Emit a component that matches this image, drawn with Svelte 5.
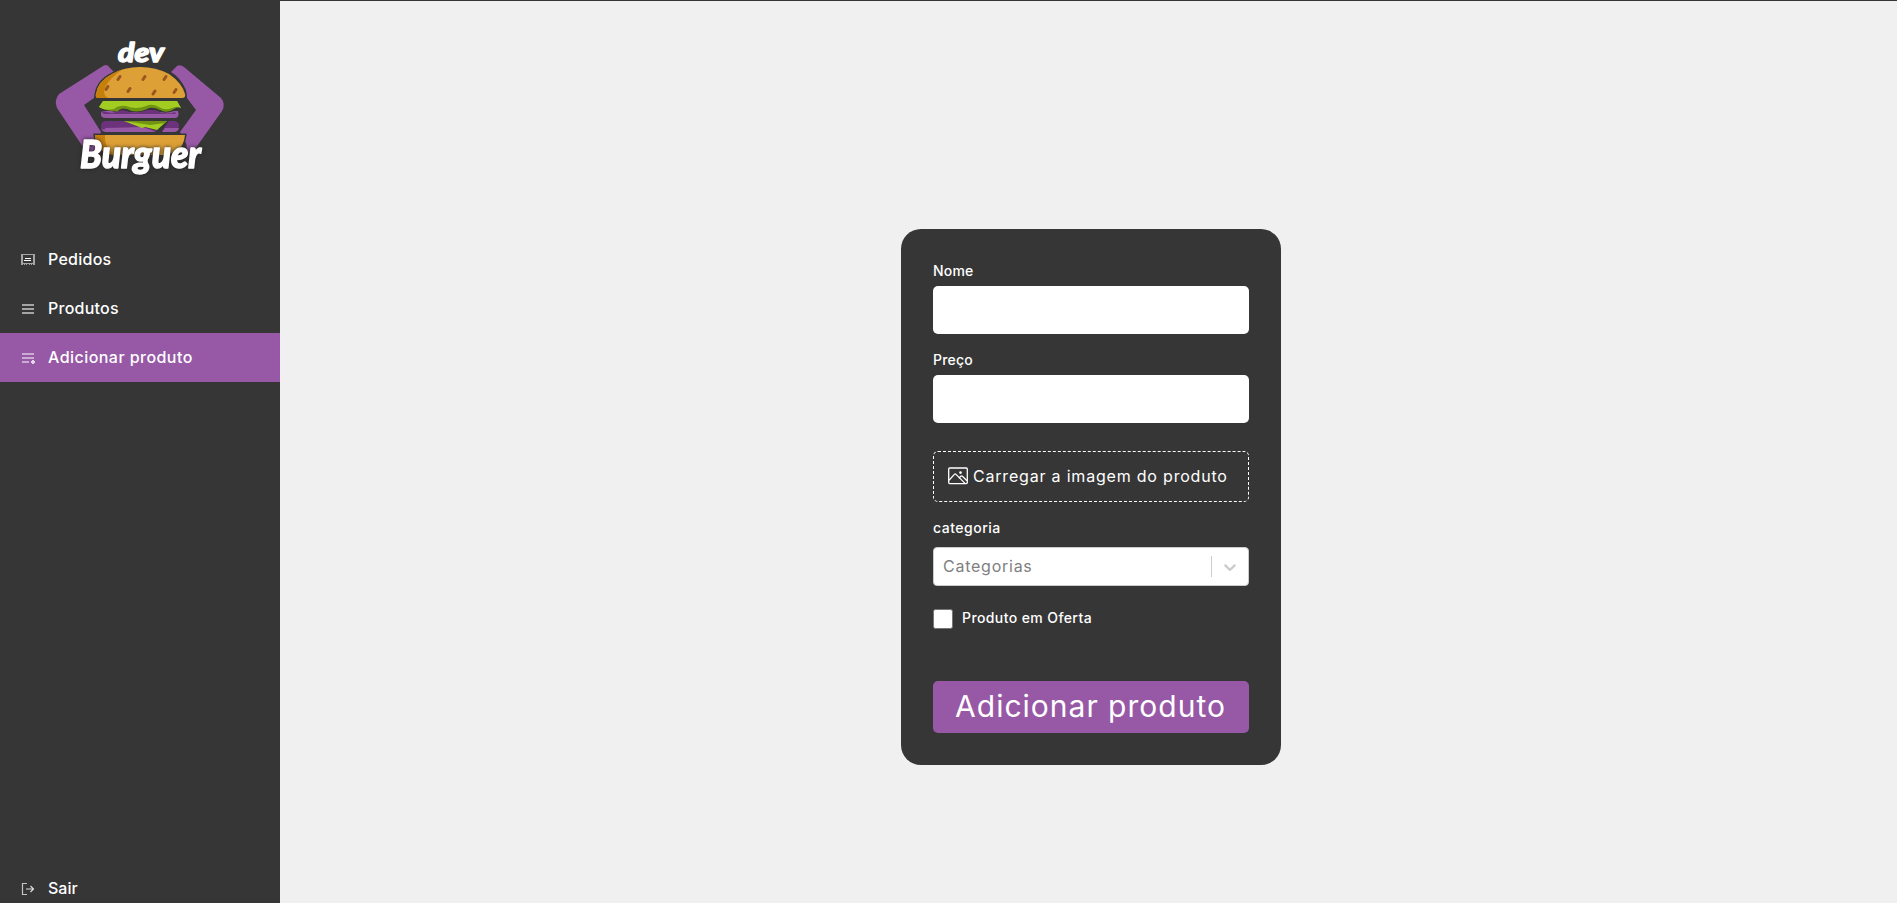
<script>
  const links = [
    { id: 'orders', label: 'Pedidos', spacing: 0.25 },
    { id: 'list', label: 'Produtos', spacing: 0.25 },
    { id: 'add', label: 'Adicionar produto', spacing: 0.45, active: true }
  ];
  const seeds = [[78, 48], [103, 48], [124, 48], [66, 58], [88, 60], [113, 62.5], [134, 61]];
</script>

<div class="page">
  <aside>
    <svg class="logo" viewBox="0 0 200 160" role="img" aria-label="dev Burguer">
      <path fill="#9758a6" d="M63 36Q67 33 70 38L74 42Q64 48 57 57L54 68 44 75 61 102 54 124 45 120 17 78Q14 70 19 64Z" />
      <path fill="#9758a6" d="M131 42L137 36Q140 34 144 37L181 68Q186 74 182 81L155 119 148 124 146 113 140 102 156 80 147 68 146 60Q140 47 131 42Z" />
      <path fill="#dda036" stroke="#363636" stroke-width="3" paint-order="stroke" d="M56 64Q58 51 72 44 84 37 100 37 116 37 129 44 142 53 145 64Q146 68 142 68H58Q55 68 56 64Z" />
      <path fill="#c77f0c" d="M56 64Q58 51 72 44L83 39Q66 51 64 61 64 66 68 68H58Q55 68 56 64Z" />
      <g stroke="#99561f" stroke-width="3" stroke-linecap="round">
        {#each seeds as [x, y]}
          <path d="M{x} {y + 1.5}l2-3" />
        {/each}
      </g>
      <path fill="#709412" d="M63 71H137L141 78Q138 76 134 79 127 84 120 80 112 76 107 79 96 84 87 79 81 77 77 82L75 81Q65 81 59 77Z" />
      <path fill="#a3cc22" d="M63 71H137L141 78Q137 76 132 78 125 81 119 77 112 73 106 76 96 80 86 76 79 75 74 79 65 81 59 77Z" />
      <path fill="#9758a6" d="M62 81H71L76 82 83 81Q92 83 103 82L114 80Q124 85 134 81H138Q140 88 135 88H66Q60 88 61 83Z" />
      <path fill="#6c327b" d="M72 83L83 80Q94 85 107 80L115 80Q125 86 135 82L136 84H65Q62 84 62 81Z" />
      <path fill="#6c327b" d="M65 91H85L118 101H65Q61 101 61 96 61 92 65 91ZM135 91Q139 92 139 96 139 101 134 101H122L129 91Z" />
      <path fill="#9758a6" d="M61 98Q63 101 66 98L103 97 116 102H66Q62 102 61 98ZM125 98H139Q138 102 134 102H122Z" />
      <path fill="#a3cc22" d="M84 91H127L117 100 105 97 102 98Z" />
      <path fill="#709412" d="M84 91H127L125 93 110 95Z" />
      <path fill="#dda036" stroke="#363636" stroke-width="3" paint-order="stroke" d="M55 105H145Q144 115 138 120 130 125 122 125H76Q60 123 56 113Z" />
      <path fill="#c77f0c" d="M55 105H65Q64 118 75 125 60 123 56 113Z" />
      <g class="script">
        <text x="78" y="32" font-size="27" textLength="46" lengthAdjust="spacingAndGlyphs">dev</text>
        <text class="outlined" x="40" y="138" font-size="37" textLength="121" lengthAdjust="spacingAndGlyphs">Burguer</text>
      </g>
    </svg>

    <nav>
      {#each links as link}
        <a class:active={link.active} href="#{link.id}">
          <svg class="icon" viewBox="0 0 14 14" shape-rendering="crispEdges">
            {#if link.id === 'orders'}
              <path fill="#a5a5a5" fill-rule="evenodd" d="M0 1h14v11h-2v-1h-1v1h-1v-1H9v1H8v-1H6v1H5v-1H4v1H3v-1H2v1H0zM2 2v8h10V2z" />
              <path fill="#fff" d="M4 5h6v1H4zM3 7h7v1H3z" />
            {:else if link.id === 'list'}
              <path fill="#a5a5a5" d="M1 2h12v2H1zM1 6h12v2H1zM1 10h12v2H1z" />
            {:else}
              <path fill="#cbabd2" d="M1 2h12v2H1zM1 6h12v2H1zM1 10h7v2H1z" />
              <path fill="#e5d5e9" d="M11 9h2v1h1v2h-1v1h-2v-1h-1v-2h1z" />
            {/if}
          </svg>
          <span style:letter-spacing="{link.spacing}px">{link.label}</span>
        </a>
      {/each}
    </nav>

    <a class="exit" href="#exit">
      <svg class="icon" viewBox="0 0 14 14" fill="none">
        <path stroke="#c5c5c5" d="M6 1.5H1.5v11H6" stroke-width="1.2" />
        <path stroke="#ddd" d="M5 7h7M9.5 4l3 3-3 3" stroke-width="1.2" />
      </svg>
      <span>Sair</span>
    </a>
  </aside>

  <main>
    <form>
      <label class="field"><span>Nome</span><input type="text" /></label>
      <label class="field"><span>Preço</span><input type="text" /></label>

      <div class="upload">
        <svg width="20" height="18" viewBox="0 0 20 18" fill="none" stroke="#fff" stroke-width="1.3">
          <rect x=".7" y="1" width="18.6" height="15.6" rx="1" />
          <path d="M1 13.2l5.4-5.8q.8-.8 1.6 0l8.8 8.7M10.8 11.2l2-2q.8-.7 1.6 0l4.6 4.5" />
          <circle cx="12.5" cy="5.6" r=".7" fill="#fff" />
        </svg>
        <span>Carregar a imagem do produto</span>
      </div>

      <span class="category">categoria</span>
      <div class="select">
        <span>Categorias</span>
        <i></i>
        <svg width="20" height="20" viewBox="0 0 20 20" fill="#ccc">
          <path d="M4.516 7.548c0.436-0.446 1.043-0.481 1.576 0l3.908 3.747 3.908-3.747c0.533-0.481 1.141-0.446 1.574 0 0.436 0.445 0.408 1.197 0 1.615-0.406 0.418-4.695 4.502-4.695 4.502-0.217 0.223-0.502 0.335-0.787 0.335s-0.57-0.112-0.789-0.335c0 0-4.287-4.084-4.695-4.502s-0.436-1.17 0-1.615z" />
        </svg>
      </div>

      <div class="offer"><b></b><span>Produto em Oferta</span></div>
      <button type="button">Adicionar produto</button>
    </form>
  </main>
</div>

<style>
  :global(body) { margin: 0; }
  .page {
    display: flex;
    box-sizing: border-box;
    height: 903px;
    border-top: 1px solid #363636;
    background: #f0f0f0;
    font-family: Inter, "Liberation Sans", sans-serif;
    font-size: 16px;
    font-weight: 500;
    color: #fff;
    overflow: hidden;
  }
  * { box-sizing: border-box; }
  aside {
    display: flex;
    flex-direction: column;
    width: 280px;
    background: #363636;
  }
  .logo {
    display: block;
    width: 200px;
    height: 160px;
    margin: 29px 0 43px 40px;
    flex: none;
  }
  .script {
    font-family: Lato, sans-serif;
    font-weight: 900;
    font-style: italic;
    fill: #fff;
    stroke: #fff;
    stroke-width: 1.4;
    stroke-linejoin: round;
  }
  .outlined { filter: drop-shadow(0 0 2px #222); }
  nav { display: flex; flex-direction: column; padding-top: 2px; }
  nav a, .exit {
    display: flex;
    align-items: center;
    gap: 13px;
    height: 49px;
    padding: 0 0 1px 21px;
    color: #fff;
    text-decoration: none;
    white-space: nowrap;
  }
  .active { background: #9758a6; }
  .exit { height: 29px; margin-top: auto; }
  .icon { width: 14px; height: 14px; margin-top: 2px; flex: none; }
  main {
    display: flex;
    flex: 1;
    justify-content: center;
    align-items: flex-start;
    padding: 228px 0 0 5px;
  }
  form {
    display: flex;
    flex-direction: column;
    width: 380px;
    height: 536px;
    padding: 32px;
    border-radius: 20px;
    background: #363636;
    white-space: nowrap;
  }
  .field {
    display: flex;
    flex-direction: column;
    height: 89px;
    font-size: 14px;
    line-height: 20px;
    letter-spacing: 0.2px;
  }
  .field input {
    width: 100%;
    height: 48px;
    margin: 5px 0 0;
    border: 0;
    border-radius: 5px;
    background: #fff;
  }
  .upload {
    display: flex;
    align-items: center;
    gap: 5px;
    height: 51px;
    margin-top: 12px;
    padding: 0 0 1px 14px;
    border: 1px dashed #fff;
    border-radius: 5px;
    font-weight: 400;
    letter-spacing: 0.8px;
  }
  .category {
    margin-top: 16px;
    font-size: 14px;
    line-height: 20px;
    letter-spacing: 0.5px;
  }
  .select {
    display: flex;
    align-items: center;
    height: 39px;
    margin-top: 9px;
    padding: 0 8px 0 9px;
    border: 1px solid #ccc;
    border-radius: 4px;
    background: #fff;
    color: #808080;
    font-weight: 400;
    letter-spacing: 0.75px;
  }
  .select i { width: 1px; height: 21px; margin: 0 8px 0 auto; background: #ccc; }
  .select span { padding-bottom: 1px; }
  .offer {
    display: flex;
    align-items: center;
    gap: 9px;
    height: 21px;
    margin-top: 22px;
    font-size: 14px;
    letter-spacing: 0.4px;
  }
  .offer b {
    width: 20px;
    height: 20px;
    border: 1px solid #767676;
    border-radius: 2.5px;
    background: #fff;
  }
  .offer span { padding-bottom: 2px; }
  button {
    height: 52px;
    margin: 52px 0 0;
    padding: 0 1px 2px 0;
    border: 0;
    border-radius: 5px;
    background: #9758a6;
    color: #fff;
    font: 400 30px Inter, sans-serif;
    letter-spacing: 1px;
  }
</style>
